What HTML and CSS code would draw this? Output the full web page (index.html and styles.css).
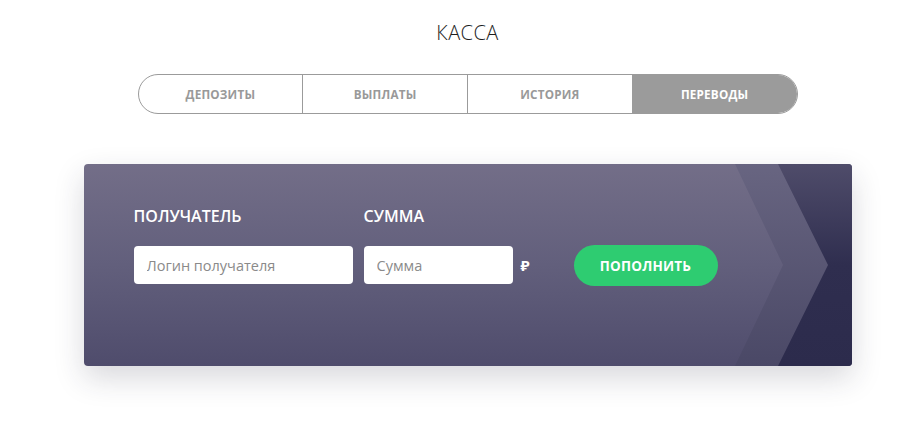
FILE: index.html
```html
<!DOCTYPE html>
<html lang="ru">
<head>
<meta charset="utf-8">
<link rel="stylesheet" href="styles.css">
</head>
<body>
<main class="page">
  <h1 class="title">КАССА</h1>
  <nav class="tabs">
    <a class="tab">Депозиты</a>
    <a class="tab">Выплаты</a>
    <a class="tab">История</a>
    <a class="tab tab-active">Переводы</a>
  </nav>
  <section class="card">
    <svg class="card-deco" width="117" height="202" viewBox="0 0 117 202" preserveAspectRatio="none" aria-hidden="true">
      <defs>
        <linearGradient id="g1" x1="0" y1="0" x2="0" y2="1">
          <stop offset="0" stop-color="#686581"/>
          <stop offset="1" stop-color="#4a4866"/>
        </linearGradient>
        <linearGradient id="g2" x1="0" y1="0" x2="0" y2="1">
          <stop offset="0" stop-color="#4f4c6a"/>
          <stop offset="0.5" stop-color="#2f2e4f"/>
          <stop offset="1" stop-color="#2c2b4c"/>
        </linearGradient>
      </defs>
      <polygon points="0,0 117,0 117,202 0,202 48,101" fill="url(#g1)"/>
      <polygon points="43,0 117,0 117,202 43,202 93,101" fill="url(#g2)"/>
    </svg>
    <form class="form">
      <div class="field">
        <label class="label">ПОЛУЧАТЕЛЬ</label>
        <input class="input input-login" type="text" placeholder="Логин получателя">
      </div>
      <div class="field">
        <label class="label">СУММА</label>
        <div class="sum-row">
          <input class="input input-sum" type="text" placeholder="Сумма">
          <span class="rub">₽</span>
        </div>
      </div>
      <button class="btn" type="button">ПОПОЛНИТЬ</button>
    </form>
  </section>
</main>
</body>
</html>
```

FILE: styles.css
```css
* { box-sizing: border-box; }
html, body { margin: 0; padding: 0; background: #fff; }
body { font-family: "Open Sans", "Noto Sans", sans-serif; color: #222; }

.page {
  display: flex;
  flex-direction: column;
  align-items: center;
  padding: 20px 0 60px 22px;
}

.title {
  margin: 0;
  font-size: 20px;
  font-weight: 300;
  line-height: 26px;
  letter-spacing: 0.4px;
  color: #1e1e1e;
}

.tabs {
  display: flex;
  margin-top: 28px;
  width: 660px;
  height: 40px;
  border: 1px solid #9b9b9b;
  border-radius: 20px;
  overflow: hidden;
}

.tab {
  flex: 1;
  display: flex;
  align-items: center;
  justify-content: center;
  font-size: 11.7px;
  font-weight: 700;
  text-transform: uppercase;
  color: #999;
  letter-spacing: 0.2px;
  border-left: 1px solid #9b9b9b;
}
.tab:first-child { border-left: none; }
.tab-active { background: #9b9b9b; color: #fff; }

.card {
  position: relative;
  margin-top: 50px;
  width: 768px;
  height: 202px;
  border-radius: 4px;
  overflow: hidden;
  background: linear-gradient(180deg, #736e88 0%, #625f7c 50%, #4f4c6c 100%);
  box-shadow: 0 12px 30px rgba(40, 40, 60, 0.18);
}

.card-deco {
  position: absolute;
  top: 0;
  right: 0;
  display: block;
}

.form {
  position: relative;
  display: flex;
  align-items: flex-end;
  padding: 42px 0 0 50px;
}

.field {
  display: flex;
  flex-direction: column;
  margin-right: 11px;
}

.label {
  font-size: 16px;
  font-weight: 600;
  color: #fff;
  line-height: 20px;
  margin-bottom: 20px;
}

.input {
  height: 38px;
  border: none;
  border-radius: 4px;
  background: #fff;
  padding: 0 13px;
  font-family: "Open Sans", "Noto Sans", sans-serif;
  font-size: 14.5px;
  color: #333;
  outline: none;
}
.input::placeholder { color: #8a8a8a; }
.input-login { width: 219px; }
.input-sum { width: 149px; }

.sum-row {
  display: flex;
  align-items: center;
}

.rub {
  margin-left: 8px;
  font-size: 15px;
  font-weight: 700;
  color: #fff;
}

.btn {
  margin-left: 33px;
  margin-bottom: -2px;
  width: 144px;
  height: 41px;
  border: none;
  border-radius: 21px;
  background: #2ecc71;
  color: #fff;
  font-family: "Open Sans", "Noto Sans", sans-serif;
  font-size: 13.5px;
  font-weight: 700;
  letter-spacing: 0.2px;
}
```
